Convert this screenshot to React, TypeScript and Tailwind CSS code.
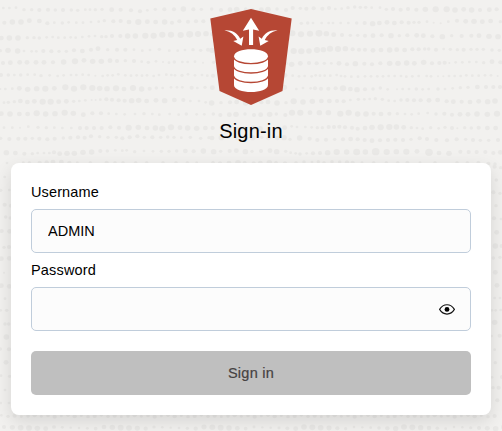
import { useState } from "react";

// Dotted texture: x, y, r triples in thirds of a pixel.
const LEFT: number[][] = [
  [10,24,4,28,24,4,48,23,4,72,29,5,95,29,5,118,30,6,144,29,6,166,30,5,189,30,6,214,30,5,233,31,5,256,29,4,270,29,4,286,29,5,306,28,5,335,29,7,362,29,6,393,31,6,420,34,6,442,31,4,466,28,5,493,28,6,522,28,6,550,27,8,580,28,6,604,28,5],
  [13,68,6,37,66,8,63,66,8,88,62,7,118,63,7,142,70,6,163,68,4,187,69,5,206,67,4,229,68,4,249,68,4,273,66,4,296,65,4,313,62,5,340,64,6,362,63,6,387,66,7,415,66,9,442,65,7,467,66,7,494,66,8,516,68,6,538,64,6,564,65,6,588,64,6,610,64,6],
  [4,114,7,28,114,8,54,114,8,82,113,5,102,113,5,118,114,5,140,112,4,158,111,4,175,113,4,194,113,4,212,112,4,227,113,4,247,111,4,267,109,4,285,108,4,305,110,5,318,110,5,336,108,6,361,108,6,383,108,8,406,108,8,436,107,9,461,107,9,487,104,9,513,104,9,542,105,9,569,103,10,594,102,9,618,101,8],
  [1,152,5,24,151,8,53,153,8,72,153,4,95,154,4,109,154,4,130,153,6,154,154,6,177,154,5,199,154,5,222,151,6,247,153,7,273,149,6,294,146,7,323,149,5,351,149,6,376,149,6,402,149,4,427,152,4,450,150,4,478,148,5,508,152,4,533,152,4,555,150,4,579,149,5,602,151,5,624,149,6],
  [9,189,6,31,188,7,59,187,7,81,187,7,108,187,7,132,187,7,159,187,6,191,186,8,225,184,9,252,181,7,278,184,8,304,184,8,330,182,7,351,183,6,376,182,5,402,183,6,425,185,4,445,187,5,468,184,4,489,186,3,507,188,4,523,186,5,547,186,4,563,186,4,585,185,4,609,188,3],
  [3,225,6,25,225,5,43,225,4,62,225,5,83,224,4,104,224,4,123,227,5,149,226,4,173,228,4,191,226,4,213,225,4,229,225,4,248,224,4,266,225,4,286,227,3,308,228,4,323,226,4,338,226,4,355,223,4,376,226,4,393,227,4,410,226,4,426,227,4,441,226,4,461,228,4,477,225,4,499,224,4,514,225,4,525,226,4,546,226,5,564,223,4,585,226,4,606,225,4,622,227,4],
  [1,267,3,16,267,4,37,266,4,58,265,7,83,268,8,110,266,8,136,266,9,163,265,7,196,262,9,222,266,9,250,262,9,277,264,9,299,265,8,321,266,8,348,265,9,372,267,7,399,264,9,425,267,8,449,266,6,469,264,5,488,264,4,513,262,4,531,262,4,547,262,4,575,263,6,592,264,4,615,262,5],
  [12,308,4,25,307,5,43,305,5,61,303,7,82,306,7,103,304,7,128,305,9,152,305,9,176,305,7,199,304,7,221,304,5,238,303,4,256,301,4,275,300,3,287,300,3,301,299,4,319,298,6,336,299,6,356,301,6,374,302,6,395,302,8,416,301,8,440,303,7,468,301,7,494,302,8,523,300,7,550,300,6,571,303,4,597,303,4,617,307,4],
  [4,341,7,30,342,8,58,342,7,83,342,7,110,340,9,137,342,8,165,341,8,194,338,9,220,340,8,250,344,7,277,340,6,303,340,6,326,341,4,349,342,4,374,343,4,405,342,4,432,341,5,457,342,4,478,344,4,509,342,4,536,344,4,559,342,5,590,343,4,613,343,4],
  [12,383,4,37,383,4,60,383,3,85,380,4,114,382,5,139,383,5,163,383,4,187,384,4,214,384,4,240,384,6,260,384,6,282,384,6,305,384,6,331,382,6,357,383,6,386,383,9,415,382,8,441,384,7,466,384,8,487,386,9,513,382,9,540,383,7,563,384,8,590,385,8,616,384,7],
  [2,415,5,28,417,6,55,416,6,76,416,6,97,415,5,118,416,6,142,418,6,164,416,6,190,414,5,211,413,6,234,412,6,254,413,6,273,409,6,299,410,5,324,412,5,349,412,5,367,415,6,389,412,6,412,409,6,433,412,5,457,412,6,482,412,5,503,411,5,522,412,5,544,413,4,571,412,5,602,415,5,627,413,5],
  [19,458,8,46,459,7,73,461,6,97,461,5,113,459,4,132,459,4,148,459,4,162,457,6,179,461,7,201,460,8,223,460,8,249,457,8,275,456,8,301,453,6,322,453,5,346,451,4,367,452,4,380,451,4,404,455,5,432,453,4,459,454,4,484,454,5,507,454,5,530,453,5,556,453,7,581,454,6,610,453,8],
  [21,489,4,70,488,4,88,488,5,119,488,6,140,487,6,159,486,7,184,486,7,208,488,6,232,488,4,271,488,5,320,488,6,345,488,5,369,488,5,407,488,5,440,488,5,489,488,5,528,488,5,562,488,5,590,488,4],
];

// Columns right of the logo; x is measured from the 290px mark.
const RIGHT: number[][] = [
  [8,24,6,31,25,5,49,26,6,71,25,6,97,26,6,117,24,6,136,27,4,155,26,4,174,23,5,194,21,5,211,22,5,227,22,5,245,23,4,270,23,4,289,28,5,309,27,6,332,29,6,354,27,6,379,29,6,406,28,8,437,28,9,470,28,9,495,30,8,521,28,7,545,30,8,570,30,6,598,29,7,620,28,6],
  [34,70,5,53,69,5,69,69,4,95,69,4,116,69,4,129,69,4,152,69,4,175,69,4,200,69,5,224,69,6,248,71,8,268,69,7,291,67,7,313,69,7,335,67,6,356,68,6,372,67,5,387,67,5,411,65,4,431,68,3,452,70,3,475,65,4,501,62,6,527,64,7,552,64,8,577,65,7,602,63,7,631,65,5],
  [7,100,9,33,103,9,60,101,9,87,100,10,109,101,8,131,104,7,156,105,6,181,106,5,203,106,5,225,107,6,249,107,7,275,106,6,303,107,8,328,107,5,352,106,6,380,106,7,400,107,7,427,109,6,457,110,8,485,107,5,515,108,6,544,107,6,567,107,7,597,109,8,624,110,8],
  [11,153,9,34,154,9,57,153,8,81,150,9,100,149,8,120,146,9,144,147,9,166,146,8,188,148,6,207,149,6,225,149,6,249,151,7,273,150,7,299,150,8,320,149,7,344,150,7,367,148,6,386,148,6,404,147,5,416,147,5,438,149,6,461,147,4,481,148,5,502,149,5,521,149,6,543,148,5,561,148,5,580,148,5,606,150,5,628,151,5],
  [5,193,8,31,190,7,57,189,6,80,190,6,103,190,5,124,190,4,147,190,7,171,193,6,196,191,8,223,191,6,246,193,6,271,190,6,299,190,8,324,190,8,350,189,8,373,190,7,401,187,8,426,190,6,448,189,6,464,188,6,478,189,3,497,187,4,517,187,4,538,186,4,559,186,4,581,188,5,606,185,7,631,187,6],
  [8,227,4,27,229,4,44,228,4,65,229,4,77,226,4,90,227,4,104,227,4,121,227,4,140,225,4,153,228,4,165,229,4,184,230,4,204,230,4,225,229,4,243,229,4,262,229,4,279,229,4,296,228,4,314,228,4,333,228,4,349,230,4,367,229,4,386,228,4,410,228,4,423,229,4,444,229,3,460,229,3,477,228,4,494,228,4,512,228,4,529,226,4,547,227,4,566,227,4,585,226,4,603,226,4,623,228,3],
  [19,267,4,39,264,4,62,265,4,75,265,6,93,266,6,115,266,6,137,265,6,159,265,9,181,267,7,201,269,8,225,268,6,249,267,5,271,264,5,293,268,4,321,268,3,338,267,4,357,267,4,379,267,5,398,268,4,416,267,4,444,267,5,465,267,4,488,265,4,511,263,5,534,262,5,562,261,7,588,261,6,610,261,6,630,261,6],
  [11,304,9,39,306,8,67,304,8,94,303,7,118,303,7,141,303,6,161,304,6,181,300,4,205,298,5,223,298,4,239,297,4,256,296,5,277,298,5,296,302,4,314,303,4,333,300,5,352,300,6,372,301,6,392,301,6,417,301,7,443,300,7,470,304,6,490,305,7,515,305,6,540,306,7,566,304,7,593,305,8,615,303,8],
  [6,338,9,31,338,9,60,338,7,88,338,8,115,338,8,151,341,9,176,338,9,203,342,8,228,342,8,251,341,6,273,342,7,298,341,6,322,341,5,345,342,4,365,343,4,386,341,4,413,339,4,438,342,5,463,341,6,486,344,6,510,343,7,534,343,7,561,342,8,592,343,8,621,341,9],
  [5,379,4,21,381,4,46,381,4,65,382,4,82,383,5,97,383,5,116,381,6,132,381,6,148,380,6,165,382,6,186,383,6,203,386,6,225,384,7,246,382,8,272,382,9,298,381,9,319,381,8,341,382,7,364,383,5,381,384,4,398,386,4,422,383,5,446,385,4,465,382,5,486,384,6,502,385,3,524,383,5,544,384,5,566,383,6,592,384,7,617,384,7],
  [0,418,5,29,414,8,59,416,6,82,420,6,108,419,6,134,418,5,159,418,6,182,417,7,203,418,6,224,420,6,246,422,7,270,421,6,294,420,6,316,419,6,339,420,6,363,418,5,389,415,6,411,417,6,439,420,6,471,421,6,500,418,6,527,418,5,549,420,6,571,421,5,596,421,5,624,420,6],
  [2,458,4,17,460,4,30,462,5,50,460,4,69,460,6,90,459,6,113,458,8,140,456,9,170,456,8,200,456,10,226,456,8,257,455,11,290,456,9,319,455,8,349,455,9,381,454,7,417,457,11,447,459,7,477,460,8,511,455,6,536,456,6,560,456,6,586,456,6,610,459,6,631,457,7],
  [18,488,5,42,486,5,66,486,4,85,485,5,102,488,5,126,485,5,149,486,5,171,487,6,188,488,6,216,488,4,251,488,5,289,488,5,323,488,5,352,487,5,390,488,4,435,488,5,501,488,5,532,488,5,565,487,5,595,491,6,615,492,5],
];

const MIDDLE_COLUMNS = [635, 660, 684, 708, 732, 756, 780, 804, 828, 852];

// Texture that stays visible around the card.
const EDGES: [number, number, number][] = [
  [14,531,4],[2,571,5],[28,570,4],[14,614,6],[33,617,6],[17,651,5],[31,654,5],[5,693,6],[29,694,7],
  [12,742,5],[27,741,6],[4,776,7],[28,775,7],[12,818,3],[4,857,7],[28,859,7],[15,896,4],[20,931,5],[2,931,4],[15,972,5],[26,972,5],[19,1011,8],[1,1047,5],[27,1048,6],[18,1087,7],[3,1127,4],[29,1129,5],[15,1170,4],[27,1209,4],[2,1209,4],
  [1484,500,6],[1502,503,5],[1489,540,5],[1480,577,6],[1500,580,5],[1488,617,5],[1482,655,6],[1503,657,4],[1490,697,7],[1486,738,8],[1505,738,6],[1480,774,5],[1500,772,5],[1486,817,7],[1491,856,7],[1484,894,4],[1500,894,4],[1476,931,4],[1487,931,4],[1502,930,4],[1484,967,8],[1475,1008,4],[1499,1007,6],[1484,1049,4],[1486,1088,5],[1476,1132,4],[1506,1131,6],[1479,1163,5],[1496,1163,6],[1492,1201,6],
];

const BOTTOM_UPPER = Array.from({ length: 75 }, (_, i): [number, number, number] => [
  i * 20 + 4, 1246 + ((i * 3) % 5), 4 + (i % 3),
]);
const BOTTOM_LOWER = Array.from({ length: 61 }, (_, i): [number, number, number] => [
  i * 25 + 12, 1283 + ((i * 7) % 6) - 2, 6 + 2.5 * Math.sin(i * 0.55),
]);

function triples(row: number[], offset: number): [number, number, number][] {
  const out: [number, number, number][] = [];
  for (let i = 0; i < row.length; i += 3) out.push([row[i] + offset, row[i + 1], row[i + 2]]);
  return out;
}

const DOTS: [number, number, number][] = [
  ...LEFT.flatMap((row) => triples(row, 0)),
  ...RIGHT.flatMap((row) => triples(row, 870)),
  ...LEFT.flatMap((row, r) =>
    MIDDLE_COLUMNS.map((x, i): [number, number, number] => [
      x + ((r * 5 + i * 3) % 7), row[row.length - 2] + ((i * 3 + r) % 4) - 1, 5 + ((i + r) % 4),
    ]),
  ),
  ...EDGES,
  ...BOTTOM_UPPER,
  ...BOTTOM_LOWER,
];

function Texture() {
  return (
    <svg aria-hidden="true" className="absolute inset-0 h-[431px] w-[502px]" viewBox="0 0 1506 1293" fill="#e9e8e6">
      {DOTS.map(([x, y, r], i) => (
        <ellipse key={i} cx={x} cy={y} rx={r * 1.05} ry={r} />
      ))}
    </svg>
  );
}

function Logo() {
  return (
    <svg aria-hidden="true" className="h-[97px] w-[82px]" viewBox="0 0 82 97">
      <path d="M41 0 81.7 9.5 72.5 82 41 96 9.5 82 .3 9.5Z" fill="#b64734" />
      <g fill="#fff">
        <path d="M41 8.8 49.2 21.7 43.1 20.6V36H39V20.6L32.8 21.7Z" />
        <path d="M14.4 21.3C22.6 20.8 27.4 24.2 30.2 29.7L33.4 27.6 31.7 36.8 23.3 32.1 27.2 31C24.6 26 21 23 14.4 21.3Z" />
        <path d="M67.6 21.3C59.4 20.8 54.6 24.2 51.8 29.7L48.6 27.6 50.3 36.8 58.7 32.1 54.8 31C57.4 26 61 23 67.6 21.3Z" />
        <path d="M24 47.4C24 37.8 58 37.8 58 47.4V76C58 85.4 24 85.4 24 76Z" />
      </g>
      <g fill="none" stroke="#b64734" strokeWidth="1.4">
        <path d="M23.5 48.2C25.5 56.8 56.5 56.8 58.5 48.2" />
        <path d="M23.5 57.6C25.5 66.2 56.5 66.2 58.5 57.6" />
        <path d="M23.5 67C25.5 75.6 56.5 75.6 58.5 67" />
      </g>
    </svg>
  );
}

function EyeIcon() {
  return (
    <svg aria-hidden="true" className="h-4 w-4" viewBox="0 0 16 16">
      <path d="M.6 8.4C4.4 2.2 11.6 2.2 15.4 8.4 11.6 14.6 4.4 14.6.6 8.4Z" fill="none" stroke="#111" strokeWidth="1.15" />
      <circle cx="8" cy="8.4" r="2.4" fill="#000" />
    </svg>
  );
}

export default function App() {
  const [username, setUsername] = useState("ADMIN");
  const [password, setPassword] = useState("");
  const [visible, setVisible] = useState(false);

  return (
    <main className="relative h-[431px] w-[502px] overflow-hidden bg-[#f2f1ef] font-['Liberation_Sans',Arial,sans-serif] text-black">
      <Texture />
      <div className="relative flex flex-col px-[11px] pt-[9px]">
        <header className="flex h-[154px] flex-col items-center">
          <Logo />
          <h1 className="mt-[11px] text-xl leading-7 tracking-[0.2px]">Sign-in</h1>
        </header>
        <form className="flex h-[252px] flex-col rounded-lg bg-white px-5 pt-5 shadow-[0_6px_18px_rgba(0,0,0,0.12)]">
          <label htmlFor="username" className="h-[26px] text-[14.5px] leading-[18px] tracking-[0.12px]">Username</label>
          <input
            id="username"
            value={username}
            onChange={(e) => setUsername(e.target.value)}
            className="h-11 shrink-0 rounded-[5px] border border-[#c0cddb] bg-[#fcfcfc] px-4 text-[14.5px] outline-none"
          />
          <label htmlFor="password" className="mt-2 h-[26px] text-[14.5px] leading-[18px] tracking-[0.18px]">Password</label>
          <div className="flex h-11 shrink-0 items-center rounded-[5px] border border-[#c0cddb] bg-[#fcfcfc] pr-[15px] pl-4">
            <input
              id="password"
              type={visible ? "text" : "password"}
              value={password}
              onChange={(e) => setPassword(e.target.value)}
              className="min-w-0 flex-1 bg-transparent text-[14.5px] outline-none"
            />
            <button type="button" aria-label="Show password" onClick={() => setVisible(!visible)}>
              <EyeIcon />
            </button>
          </div>
          <button
            type="button"
            className="mt-5 h-11 shrink-0 rounded-[5px] bg-[#bfbfbf] pt-0.5 text-[14.5px] tracking-[0.25px] text-[#464242] [-webkit-text-stroke:0.2px_#464242]"
          >
            Sign in
          </button>
        </form>
      </div>
    </main>
  );
}
